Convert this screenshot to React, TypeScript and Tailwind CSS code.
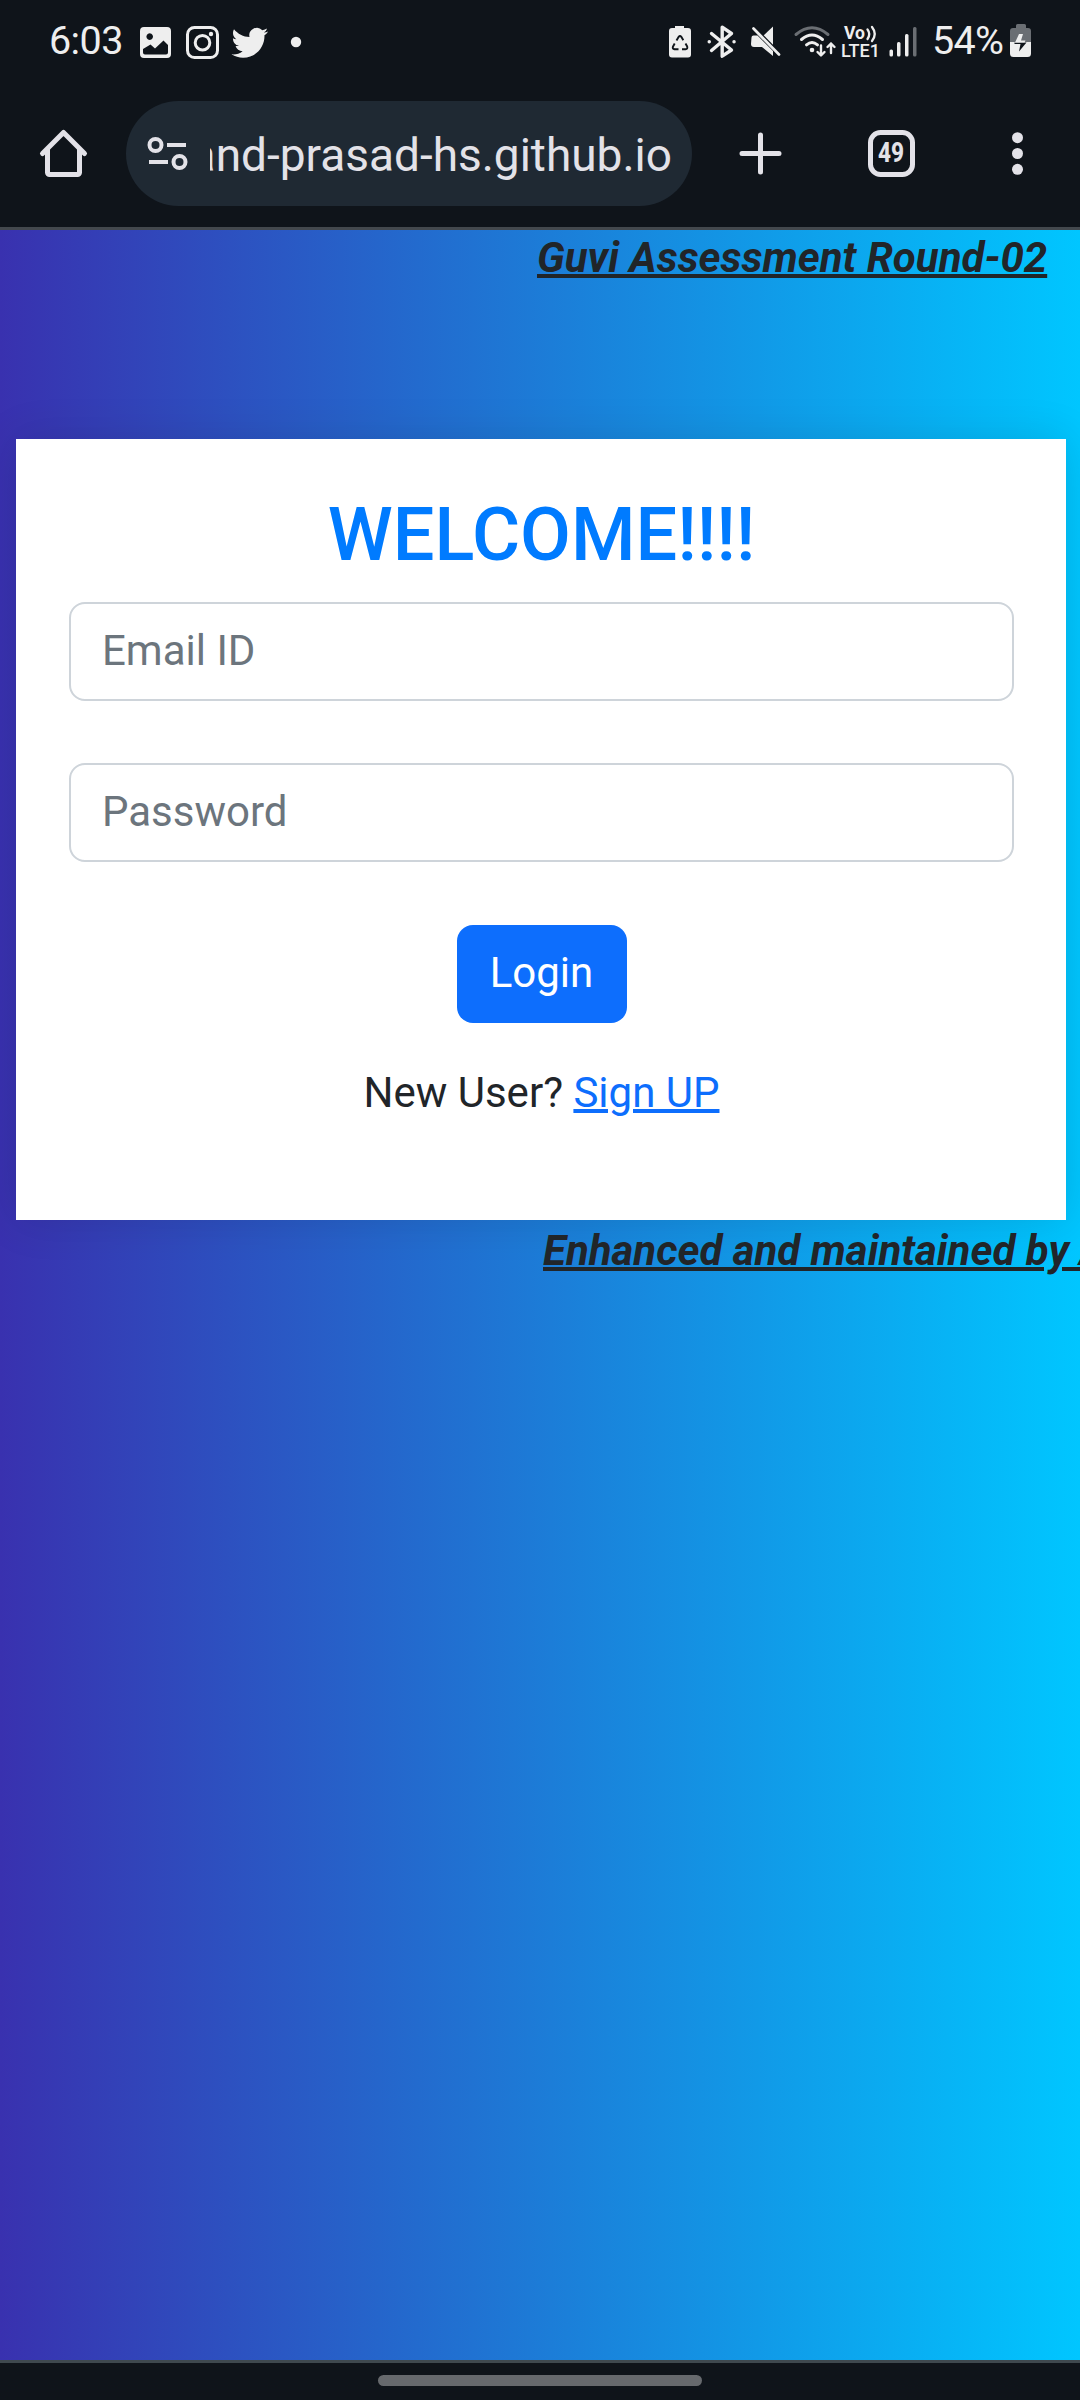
import React from 'react';

const INK = '#eeeeee';
const CHROME = '#e3e2e8';

function LeftStatusIcons() {
  return (
    <svg width="170" height="40" viewBox="136 20 170 40" fill={INK} className="shrink-0">
      <path fillRule="evenodd" d="M144 26h23a4 4 0 0 1 4 4v23a4 4 0 0 1-4 4h-23a4 4 0 0 1-4-4V30a4 4 0 0 1 4-4zM149.700 32.300a3.300 3.300 0 1 0 .01 0zM143 48v3.500a2 2 0 0 0 2 2h21a2 2 0 0 0 2-2V44l-4.500-4.500-8.500 8-4.500-4z" />
      <g fill="none" stroke={INK} strokeWidth="3">
        <rect x="187.500" y="26.500" width="30" height="30" rx="7" />
        <circle cx="202.500" cy="41.700" r="7.300" />
      </g>
      <circle cx="211" cy="33" r="2.200" />
      <g transform="translate(231.500 23.400) scale(1.53)">
        <path d="M23.953 4.570a10 10 0 0 1-2.825.775 4.958 4.958 0 0 0 2.163-2.723c-.951.555-2.005.959-3.127 1.184a4.920 4.920 0 0 0-8.384 4.482C7.690 8.095 4.067 6.130 1.640 3.162a4.822 4.822 0 0 0-.666 2.475c0 1.710.870 3.213 2.188 4.096a4.904 4.904 0 0 1-2.228-.616v.060a4.923 4.923 0 0 0 3.946 4.827 4.996 4.996 0 0 1-2.212.085 4.936 4.936 0 0 0 4.604 3.417 9.867 9.867 0 0 1-6.102 2.105c-.390 0-.779-.023-1.170-.067a13.995 13.995 0 0 0 7.557 2.209c9.053 0 13.998-7.496 13.998-13.985 0-.210 0-.420-.015-.630A9.935 9.935 0 0 0 24 4.590z" />
      </g>
      <circle cx="296" cy="41" r="5.200" />
    </svg>
  );
}

function RightStatusIcons() {
  return (
    <svg width="258" height="44" viewBox="664 18 258 44" fill={INK} className="shrink-0">
      <path d="M675 27v-2h9v2h4a3 3 0 0 1 3 3v23.500a3 3 0 0 1-3 3h-16a3 3 0 0 1-3-3V30a3 3 0 0 1 3-3z" />
      <g fill="none" stroke="#0f141a" strokeWidth="1.900" strokeLinejoin="round">
        <path d="M676.500 39.500l2.200-3.700q1.300-1.700 2.600 0l2 3.400M685.500 42.500l1.700 3q.7 2.500-1.700 2.700h-3.500M678.500 48.200h-4q-2.300-.4-1.600-2.500l1.800-3.200" />
      </g>
      <g fill="none" stroke={INK} strokeWidth="3.400" strokeLinecap="round" strokeLinejoin="round">
        <path d="M711.500 32.500l20 16.500-9.300 6.200V26.200l9.300 6.300-20 17" />
        <path d="M709.200 40.700h.1M734 40.700h.1" />
      </g>
      <path d="M773 25.500v19l-10-9.500z" />
      <path d="M753.500 27.500l25.500 26" stroke="#0f141a" strokeWidth="5" />
      <path d="M753.500 27.500l25.500 26" stroke={INK} strokeWidth="2.700" strokeLinecap="round" />
      <path d="M751.500 36.500a2 2 0 0 1 2-2h4L773 50v5l-11-9h-8a3 3 0 0 1-3-3z" />
      <g fill="none" strokeWidth="3" strokeLinecap="round">
        <path d="M796 33.500Q812 20 828 33.500" stroke="#6a6e73" />
        <path d="M801.500 38.500q10.500-9 21 0M806.500 43.800q5.500-4.600 11 0" stroke={INK} />
      </g>
      <circle cx="812" cy="49" r="2.300" />
      <g fill="none" stroke={INK} strokeWidth="2.400" strokeLinecap="round" strokeLinejoin="round">
        <path d="M821 44.500v9.500M817.500 51l3.500 3.500 3.500-3.500M831 52v-9.500M827.500 46l3.500-3.500 3.500 3.500" />
      </g>
      <text x="844" y="38.300" fontFamily="Roboto" fontWeight="700" fontSize="18" textLength="21" lengthAdjust="spacingAndGlyphs">Vo</text>
      <path d="M867.500 28.500q3.500 4.500 0 9.500M872 26q5.500 7 0 14" fill="none" stroke={INK} strokeWidth="2.300" strokeLinecap="round" />
      <text x="841" y="56" fontFamily="Roboto" fontWeight="500" fontSize="18.500" textLength="39" lengthAdjust="spacingAndGlyphs">LTE1</text>
      <rect x="889.500" y="48.500" width="3.500" height="7" rx="1.500" />
      <rect x="897" y="41" width="3.500" height="14.500" rx="1.500" />
      <rect x="905" y="33" width="3.500" height="22.500" rx="1.500" />
      <rect x="913" y="26" width="3.500" height="29.500" rx="1.500" fill="#6a6e73" />
    </svg>
  );
}

function BatteryIcon() {
  return (
    <svg width="22" height="34" viewBox="1010 24 22 34" className="shrink-0">
      <path d="M1016 28v-2.500q0-1.500 1.500-1.500h7q1.500 0 1.500 1.500V28h2a3 3 0 0 1 3 3v11h-21V31a3 3 0 0 1 3-3z" fill="#6a6e73" />
      <path d="M1010 42h21v11.500a3.500 3.500 0 0 1-3.500 3.500h-14a3.500 3.500 0 0 1-3.500-3.500z" fill={INK} />
      <path d="M1014.500 42.500h12l-7.500 9 1.500-7.500h-6z" fill="#0f141a" />
      <path d="M1019 34h4l-2 6.500h4.500l-1 2h-9.500z" fill={INK} />
    </svg>
  );
}

function StatusBar() {
  return (
    <div className="flex h-[82px] shrink-0 items-center pl-[49px] text-[#eeeeee]">
      <span className="w-[87px] shrink-0 text-[39.500px] leading-none tracking-[-0.6px]">6:03</span>
      <LeftStatusIcons />
      <div className="flex-1" />
      <RightStatusIcons />
      <span className="ml-[10px] w-[78px] shrink-0 text-[39.500px] leading-none tracking-[-0.7px]">54%</span>
      <BatteryIcon />
      <div className="w-[48px] shrink-0" />
    </div>
  );
}

function Toolbar() {
  return (
    <div className="flex h-[145px] shrink-0 items-center pb-[2px] text-[#e3e2e8]">
      <svg width="126" height="61" viewBox="0 123 126 61" fill="none" stroke={CHROME} strokeWidth="5" strokeLinejoin="round" strokeLinecap="round" className="shrink-0">
        <path d="M42.500 153.500l21-21 21 21M47.500 149v23.500a2 2 0 0 0 2 2h28a2 2 0 0 0 2-2V149" />
      </svg>
      <div className="flex h-[105px] w-[566px] shrink-0 items-center rounded-full bg-[#1f2933] pl-[21px]">
        <svg width="42" height="37" viewBox="147 135 42 37" fill="none" stroke={CHROME} strokeWidth="4" className="shrink-0">
          <circle cx="155.500" cy="145" r="6" />
          <circle cx="179.500" cy="162" r="6" />
          <path d="M167 145h19M149 162h19" />
        </svg>
        <div className="ml-[21px] flex w-[462px] justify-end overflow-hidden pt-[3px]">
          <span className="whitespace-nowrap text-[46px] leading-[60px]">anand-prasad-hs.github.io</span>
        </div>
      </div>
      <svg width="388" height="71" viewBox="692 118 388 71" fill="none" stroke={CHROME} strokeWidth="5" strokeLinecap="round" className="shrink-0">
        <path d="M742 153.500h37M760.500 135v37" />
        <rect x="870.500" y="132.500" width="42" height="42" rx="10" />
        <text x="878" y="162" fill={CHROME} stroke="none" fontFamily="Roboto" fontWeight="800" fontSize="27" textLength="26" lengthAdjust="spacingAndGlyphs">49</text>
        <g fill={CHROME} stroke="none">
          <circle cx="1017.500" cy="137.700" r="5.500" />
          <circle cx="1017.500" cy="153.500" r="5.500" />
          <circle cx="1017.500" cy="169.300" r="5.500" />
        </g>
      </svg>
    </div>
  );
}

function LoginCard() {
  const field =
    'block h-[99px] w-full shrink-0 rounded-[16px] border-2 border-[#ced4da] bg-white px-[31px] pb-[3px] text-[42px] text-[#212529] outline-none placeholder:text-[#6c757d]';
  return (
    <div className="ml-[16px] flex h-[781px] w-[1050px] flex-col items-center bg-white pr-[52px] pl-[53px] pt-[50px] shadow-[0_0_42px_rgba(0,0,0,0.12)]">
      <h1 className="text-[73.800px] leading-[92px] font-medium text-[#007bff]">WELCOME!!!!</h1>
      <input className={`${field} mt-[21px]`} placeholder="Email ID" />
      <input className={`${field} mt-[62px]`} type="password" placeholder="Password" />
      <button className="mt-[63px] h-[98px] w-[170px] rounded-[16px] bg-[#0d6efd] pb-[3px] text-[42px] leading-[63px] text-white">Login</button>
      <p className="mt-[38px] text-[42px] leading-[63px] text-[#212529]">
        New User? <a className="text-[#0d6efd] underline decoration-[4px]">Sign UP</a>
      </p>
    </div>
  );
}

export default function App() {
  return (
    <div className="flex h-[2400px] w-[1080px] flex-col overflow-hidden bg-[#0f141a] font-[Roboto,sans-serif]">
      <StatusBar />
      <Toolbar />
      <div className="h-[3px] shrink-0 bg-[#43484d]" />
      <main className="flex-1 overflow-hidden bg-[linear-gradient(to_right,#3931af,#00c6ff)] text-[#212529]">
        <p className="h-[209px] pl-[537px] text-[42px] leading-[55px] font-bold whitespace-nowrap italic underline decoration-[4px]">Guvi Assessment Round-02</p>
        <LoginCard />
        <p className="pl-[543px] text-[42px] leading-[61px] font-bold whitespace-nowrap italic underline decoration-[4px]">Enhanced and maintained by Anand</p>
      </main>
      <div className="h-[3px] shrink-0 bg-[#3f494f]" />
      <div className="flex h-[37px] shrink-0 justify-center pt-[12px]">
        <div className="h-[11px] w-[324px] rounded-full bg-[#66696d]" />
      </div>
    </div>
  );
}
